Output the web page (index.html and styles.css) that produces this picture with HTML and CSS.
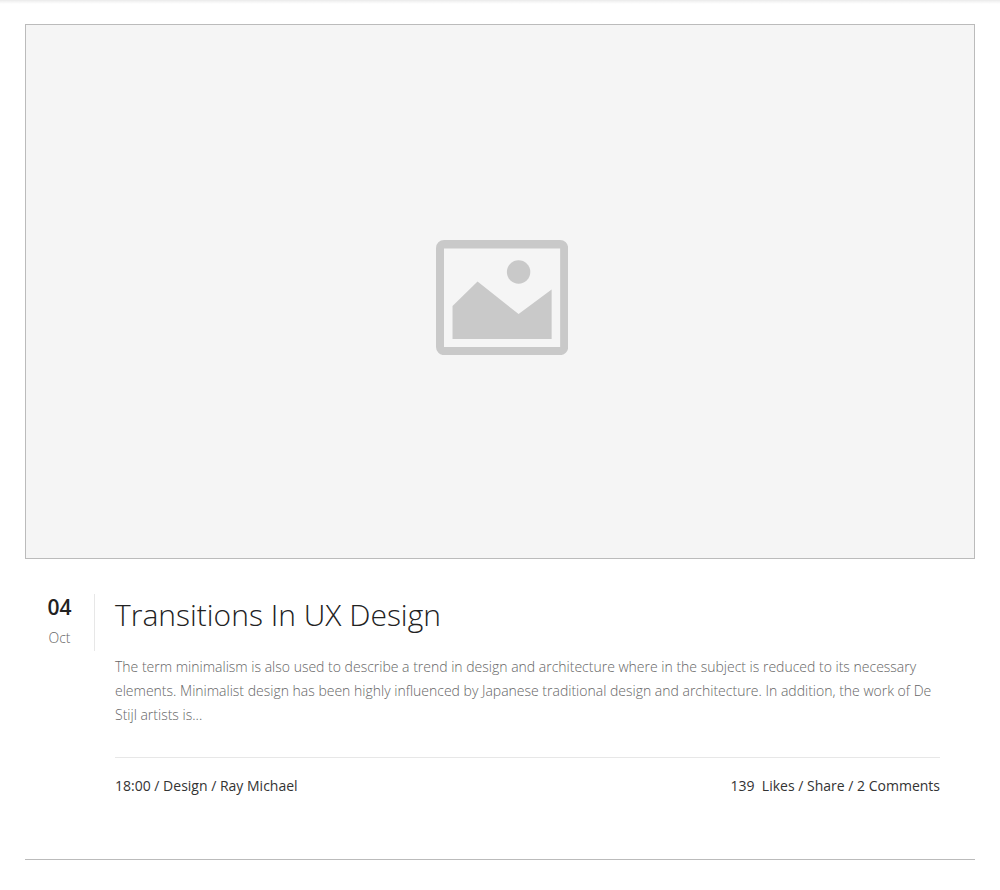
FILE: index.html
```html
<!DOCTYPE html>
<html lang="en">
<head>
<meta charset="utf-8">
<meta name="viewport" content="width=device-width, initial-scale=1">
<title>Transitions In UX Design</title>
<link rel="stylesheet" href="styles.css">
</head>
<body>
<main class="blog">
  <article class="post">
    <a class="post-media" href="#" aria-label="Transitions In UX Design">
      <svg class="placeholder" viewBox="0 0 132 115" aria-hidden="true">
        <path fill-rule="evenodd" d="M8 0H124A8 8 0 0 1 132 8V107A8 8 0 0 1 124 115H8A8 8 0 0 1 0 107V8A8 8 0 0 1 8 0ZM8 8.500V107H124V8.500Z"/>
        <circle cx="82.500" cy="32" r="11.700"/>
        <path d="M16.500 99V66L41.500 41.500L82.500 74L115.500 49.500V99Z"/>
      </svg>
    </a>
    <div class="post-body">
      <time class="post-date"><span class="day">04</span><span class="month">Oct</span></time>
      <div class="post-content">
        <h2 class="post-title"><a href="#">Transitions In UX Design</a></h2>
        <p class="post-text">The term minimalism is also used to describe a trend in design and architecture where in the subject is reduced to its necessary elements. Minimalist design has been highly influenced by Japanese traditional design and architecture. In addition, the work of De Stijl artists is...</p>
        <footer class="post-meta">
          <div>18:00 / <a href="#">Design</a> / <a href="#">Ray Michael</a></div>
          <div><a href="#">139 &nbsp;Likes</a> / <a href="#">Share</a> / <a href="#">2 Comments</a></div>
        </footer>
      </div>
    </div>
  </article>
</main>
</body>
</html>
```
FILE: styles.css
```css
* { box-sizing: border-box; }
body {
  margin: 0;
  border-top: 1px solid #ededed;
  background: #fff;
  color: #333;
  font-family: "Open Sans", sans-serif;
  font-size: 14px;
  line-height: 24px;
}
a { color: inherit; text-decoration: none; }
.blog {
  padding: 23px 25px;
  background: linear-gradient(#f1f1f1, #fff 3px);
}
.post { border-bottom: 1px solid #bbb; padding-bottom: 61px; }
.post-media {
  display: flex;
  align-items: center;
  justify-content: center;
  aspect-ratio: 950 / 535;
  padding: 12px 0 0 4px;
  border: 1px solid #bbb;
  background: #f5f5f5;
}
.placeholder { width: 14%; fill: #c9c9c9; }
.post-body { display: flex; padding: 35px 35px 0 0; }
.post-date {
  display: flex;
  flex-direction: column;
  align-items: center;
  align-self: flex-start;
  width: 70px;
  height: 57px;
  border-right: 1px solid #e7e7e7;
}
.day { color: #222; font-size: 21px; font-weight: 600; line-height: 27px; }
.month { color: #666; font-weight: 300; line-height: 34px; }
.post-content { flex: 1; padding-left: 20px; }
.post-title { margin: 0; color: #222; font-size: 30px; font-weight: 300; line-height: 42px; }
.post-text { margin: 19px 0 30px; color: #666; font-weight: 300; }
.post-meta {
  display: flex;
  justify-content: space-between;
  border-top: 1px solid #e7e7e7;
  padding-top: 16px;
}
```
